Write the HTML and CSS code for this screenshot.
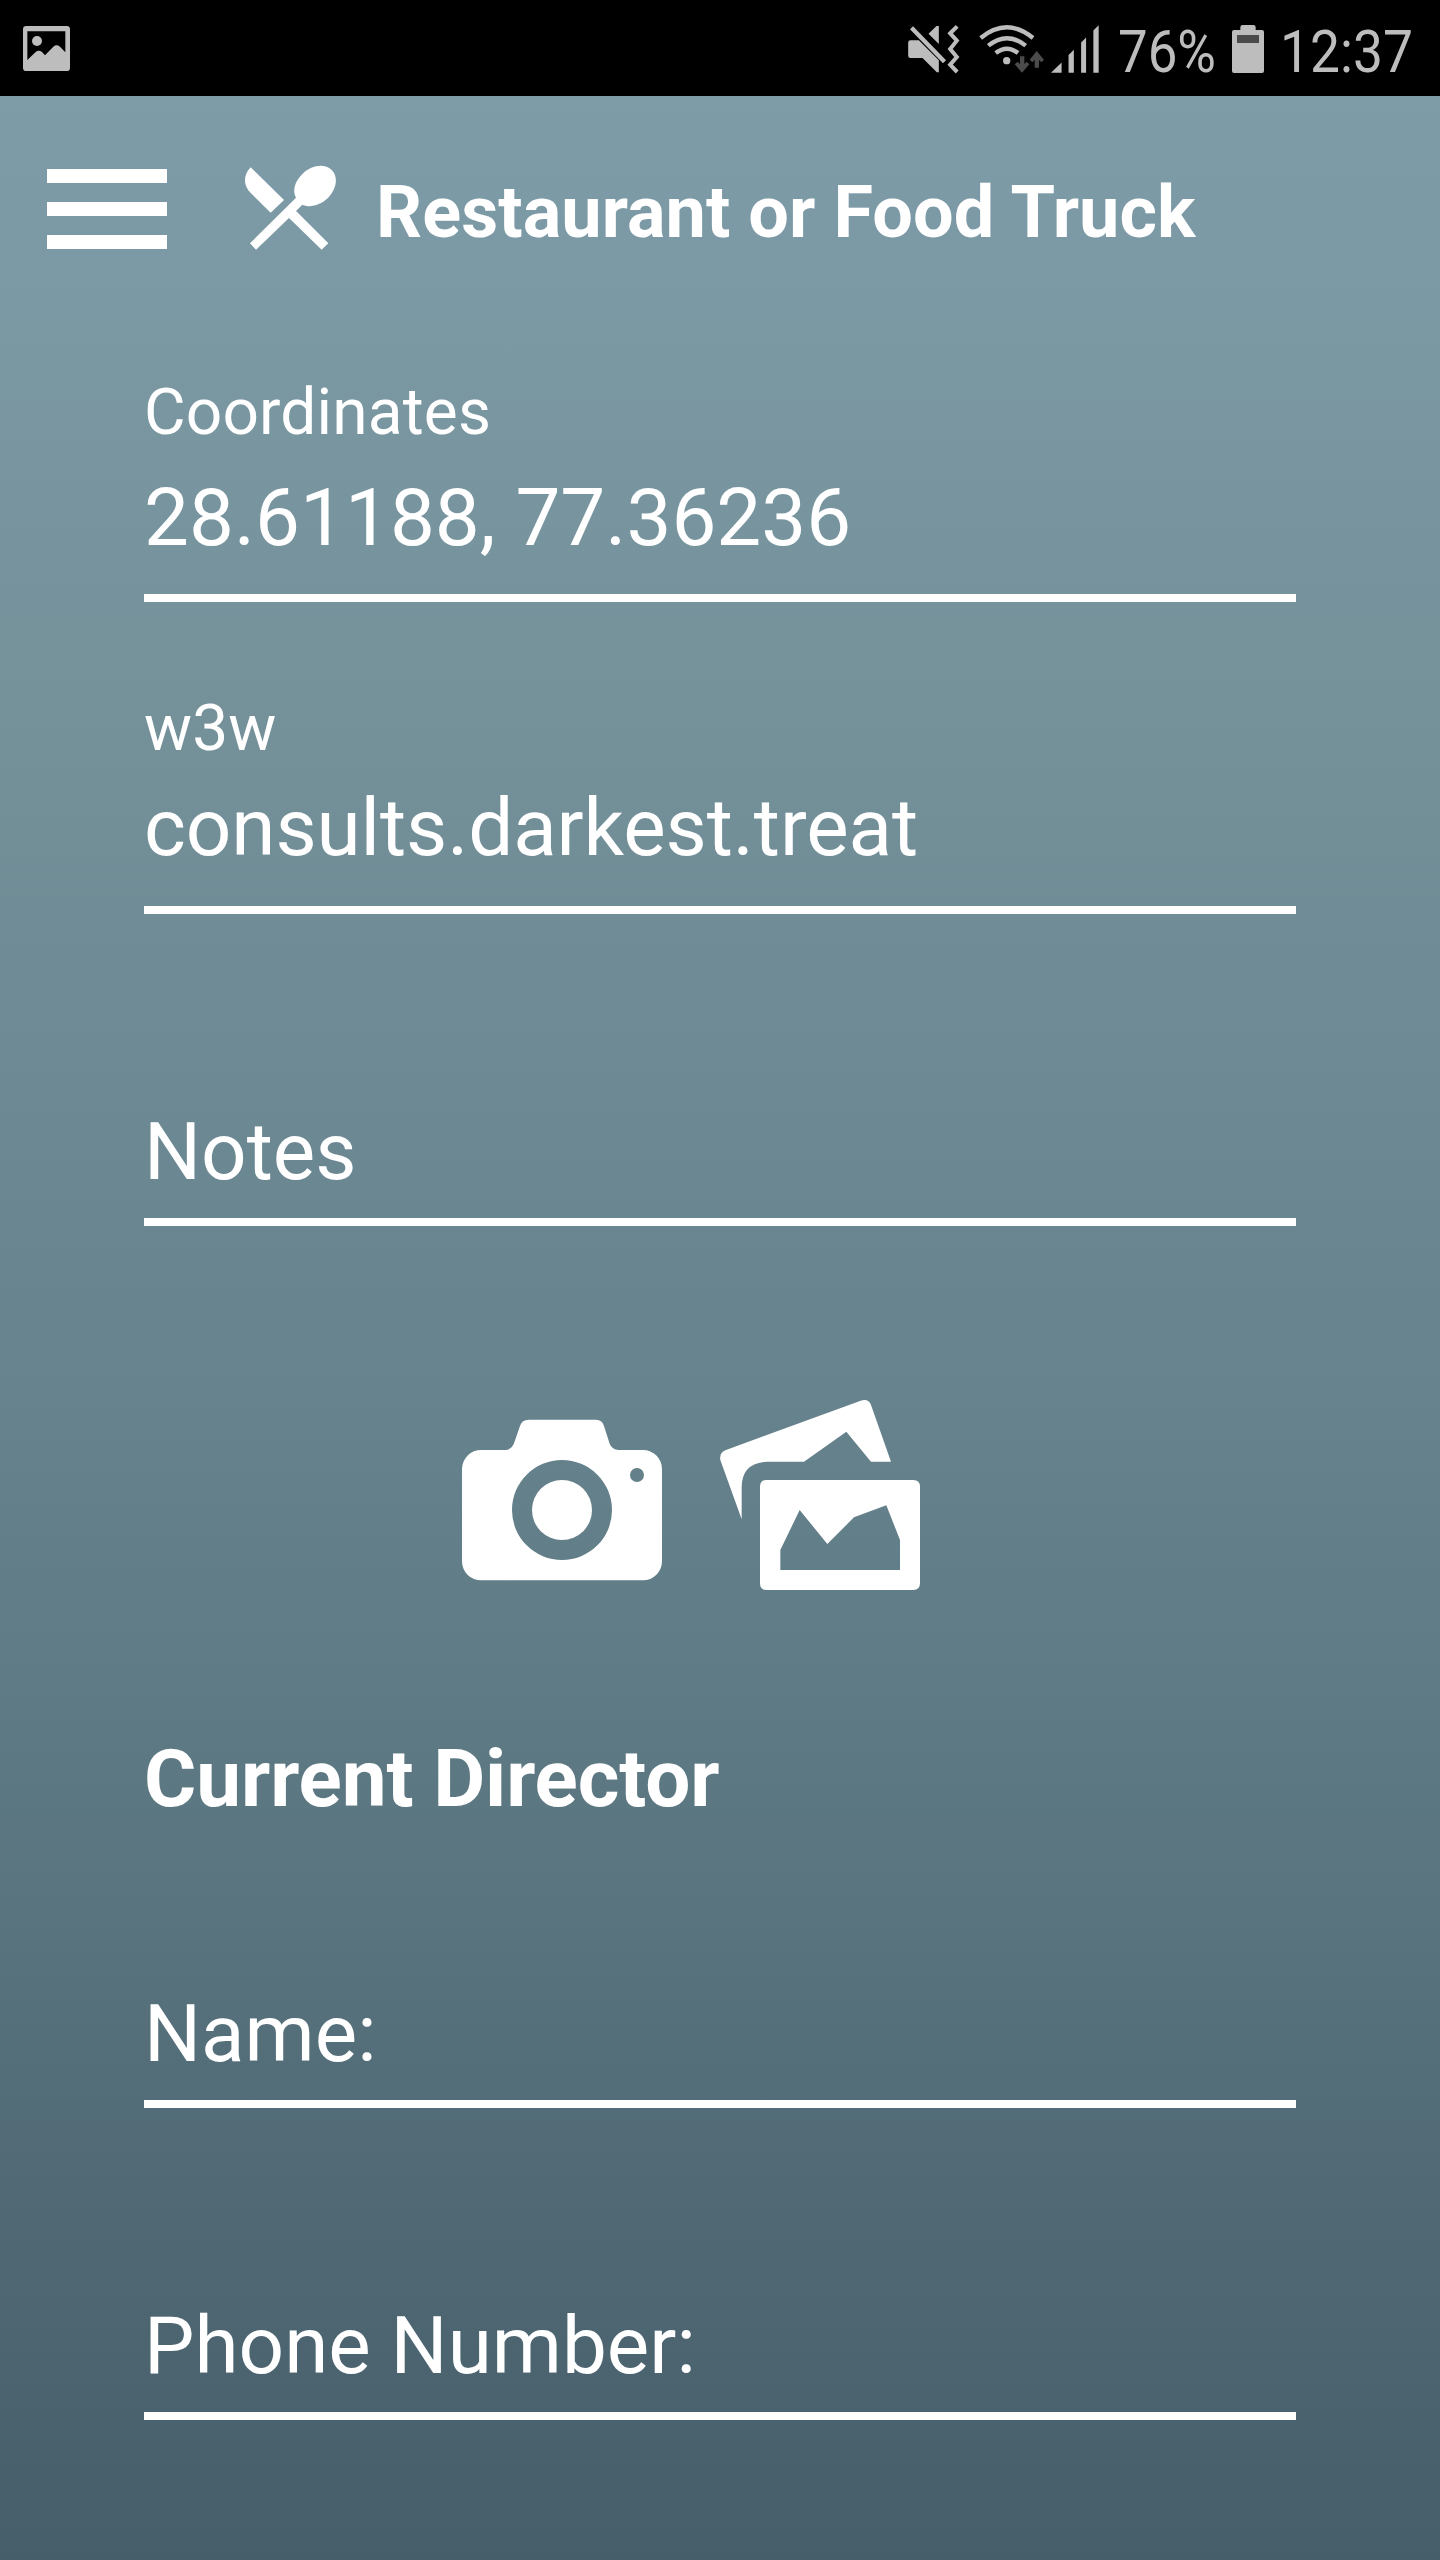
FILE: index.html
```
<!DOCTYPE html>
<html lang="en">
<head>
    <meta charset="utf-8">
    <title>Restaurant or Food Truck</title>
    <link rel="stylesheet" href="styles.css">
</head>
<body>
    <div class="status-bar">
        <svg class="status-picture" viewBox="0 0 141 135">
            <path fill-rule="evenodd" d="M10 0H131Q141 0 141 10V125Q141 135 131 135H10Q0 135 0 125V10Q0 0 10 0ZM13 16V102L38 78Q47 70 57 78L66 88L91 62Q101 54 111 62L127 79V16Z"/>
            <circle cx="42" cy="45" r="15"/>
        </svg>
        <div class="status-right">
            <svg class="status-mute" viewBox="0 0 152 144">
                <path d="M0 53Q0 46 7 46H32L92 106V142H86L43 99H7Q0 99 0 92ZM61 26L85 3H92V57Z"/>
                <path class="line" stroke-width="13" d="M10 8L109 110"/>
                <path class="line" stroke-width="12" d="M147 4L126 25L146 47L126 72L146 96L126 119L147 141"/>
            </svg>
            <svg class="status-wifi" viewBox="0 0 195 144">
                <path class="line" stroke-width="13" d="M5 39Q84 -25 162 39M28 62Q84 17 140 62M50 84Q84 58 117 84"/>
                <circle cx="83" cy="107" r="11"/>
                <path class="dim" d="M123 94H136V117L143 110L151 118L129 143L107 118L116 110L123 117ZM167 128H180V105L187 112L195 104L173 78L152 104L160 112L167 105Z"/>
            </svg>
            <svg class="status-signal" viewBox="0 0 145 144">
                <path d="M0 144L32 113V144ZM53 144V90L69 74V144ZM91 144V52L106 37V144ZM128 144V16L144 0V144Z"/>
            </svg>
            <span class="status-text battery-level">76%</span>
            <svg class="status-battery" viewBox="0 0 96 144">
                <path d="M32 0H64Q71 0 71 7V15H90Q96 15 96 21V138Q96 144 90 144H6Q0 144 0 138V21Q0 15 6 15H25V7Q25 0 32 0Z"/>
                <path class="dim" d="M15 30H81V54H15Z"/>
            </svg>
            <span class="status-text clock">12:37</span>
        </div>
    </div>

    <div class="page">
        <div class="header">
            <div class="menu-btn">
                <span></span>
                <span></span>
                <span></span>
            </div>
            <svg class="header-icon" viewBox="735 496 273 255">
                <path d="M752 503L852 601L812 639L753 581C729 557 729 527 752 503Z"/>
                <path d="M907 615C929 625 959 618 983 596C1010 569 1016 532 995 511C973 490 935 496 908 522C885 544 876 573 888 594L750 731L768 750L867 655L965 750L985 731L888 634Z"/>
            </svg>
            <h1>Restaurant or Food Truck</h1>
        </div>

        <div class="form">
            <div class="field field-coordinates">
                <div class="label">Coordinates</div>
                <div class="value">28.61188, 77.36236</div>
            </div>
            <div class="field field-w3w">
                <div class="label">w3w</div>
                <div class="value">consults.darkest.treat</div>
            </div>
            <div class="field">
                <div class="value">Notes</div>
            </div>

            <div class="photo-buttons">
                <svg viewBox="0 0 600 600">
                    <path fill-rule="evenodd" d="M58 150H130Q149 149 156 130L174 78Q180 59 200 59H402Q420 59 426 78L443 131Q450 149 470 150H543A57 57 0 0 1 600 207V484A57 57 0 0 1 543 541H58A57 57 0 0 1 0 484V207A57 57 0 0 1 58 150ZM300 180A150 150 0 1 0 300 480A150 150 0 1 0 300 180ZM525 204A21 21 0 1 0 525 246A21 21 0 1 0 525 204Z"/>
                    <circle cx="300" cy="330" r="90"/>
                </svg>
                <svg viewBox="0 0 600 600">
                    <path d="M1 180Q-3 158 18 150L422 2Q446 -5 453 15L513 185H453L379 95L252 185H142Q65 188 65 262V358Z"/>
                    <path fill-rule="evenodd" d="M140 240H580Q600 240 600 260V550Q600 570 580 570H140Q120 570 120 550V260Q120 240 140 240ZM181 450V510H540V420L499 316L402 352L322 432L239 330Z"/>
                </svg>
            </div>

            <h2>Current Director</h2>

            <div class="field field-name">
                <div class="value">Name:</div>
            </div>
            <div class="field">
                <div class="value">Phone Number:</div>
            </div>
        </div>
    </div>
</body>
</html>
```

FILE: styles.css
```
* {
    box-sizing: border-box;
}

body {
    margin: 0;
    width: 1440px;
    height: 2560px;
    overflow: hidden;
    display: flex;
    flex-direction: column;
    font-family: Roboto, sans-serif;
    color: #fff;
}

h1,
h2 {
    margin: 0;
    font-weight: 700;
}

svg {
    display: block;
    flex-shrink: 0;
    fill: currentColor;
    overflow: visible;
}

/* status bar */
.status-bar {
    display: flex;
    justify-content: space-between;
    height: 96px;
    padding: 25px 27px 0 23px;
    background: #000;
    color: #bdbdbd;
}

.status-right {
    display: flex;
    align-items: flex-start;
}

.status-picture {
    width: 47px;
    height: 45px;
    margin-top: 1px;
}

.status-mute {
    width: 51px;
    height: 48px;
    margin-right: 20px;
}

.status-wifi {
    width: 65px;
    height: 48px;
    margin-right: 7px;
}

.status-signal {
    width: 48px;
    height: 48px;
    margin-right: 19px;
}

.status-battery {
    width: 32px;
    height: 48px;
}

.line {
    fill: none;
    stroke: currentColor;
}

.dim {
    fill: #4b4b4b;
}

.status-text {
    font-size: 60px;
    line-height: 70px;
    margin-top: -8px;
    white-space: nowrap;
    transform: scaleX(0.88);
    transform-origin: 0 0;
}

.battery-level {
    width: 114px;
}

.clock {
    width: 133px;
    margin-left: 16px;
    transform: scaleX(0.89);
}

/* page */
.page {
    flex: 1;
    background: linear-gradient(#7e9ca8, #75929b 24%, #6d8a94 40%, #67838d 52%, #5f7b85 64%, #57727c 76%, #516a76 84%, #465e69);
}

.header {
    display: flex;
    align-items: flex-start;
    height: 222px;
    padding: 69px 0 0 47px;
}

.menu-btn {
    display: flex;
    flex-direction: column;
    justify-content: space-between;
    width: 120px;
    height: 80px;
    margin: 4px 78px 0 0;
}

.menu-btn span {
    height: 14px;
    background: #fff;
}

.header-icon {
    width: 91px;
    height: 85px;
}

.header h1 {
    margin: 5px 0 0 40px;
    font-size: 72px;
    line-height: 86px;
    letter-spacing: 0.07px;
}

.form {
    padding: 0 144px;
}

.field {
    display: flex;
    flex-direction: column;
    justify-content: flex-end;
    height: 312px;
    border-bottom: 8px solid #fff;
    padding-bottom: 19px;
}

.label {
    font-size: 64px;
    line-height: 76px;
    letter-spacing: 0.15px;
}

.value {
    font-size: 80px;
    line-height: 94px;
}

.field-coordinates {
    height: 284px;
    padding-bottom: 29px;
}

.field-coordinates .label {
    margin-bottom: 20px;
}

.field-w3w {
    padding-bottom: 31px;
}

.field-w3w .label {
    margin-bottom: 14px;
}

.field-w3w .value {
    letter-spacing: -0.1px;
}

.photo-buttons {
    display: flex;
    justify-content: center;
    gap: 58px;
    margin: 174px 58px 0 0;
}

.photo-buttons svg {
    width: 200px;
    height: 200px;
}

h2 {
    margin-top: 132px;
    font-size: 80px;
    line-height: 94px;
    letter-spacing: -0.1px;
}

.field-name {
    height: 282px;
}
```
